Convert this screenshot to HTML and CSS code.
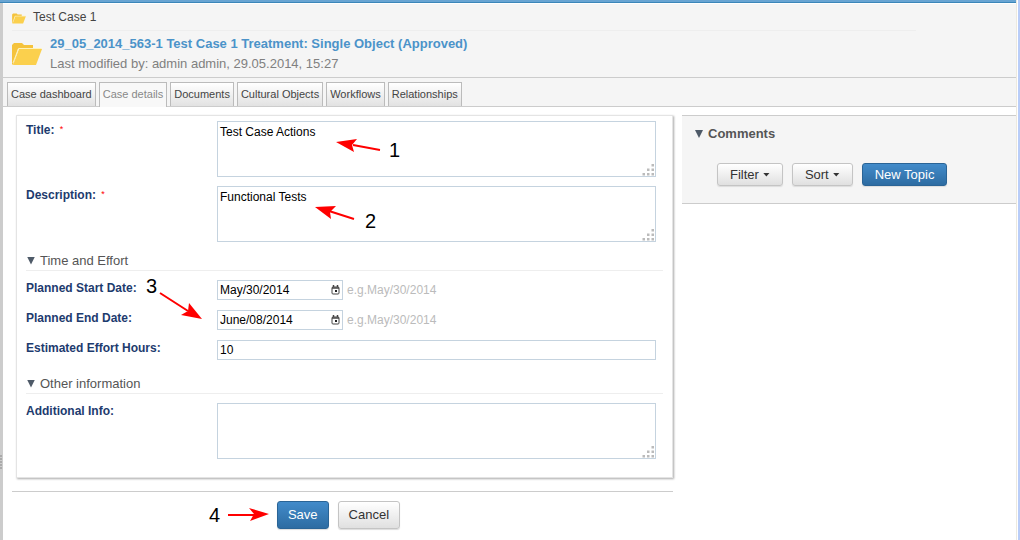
FILE: index.html
```html
<!DOCTYPE html>
<html lang="en">
<head>
<meta charset="utf-8">
<title>Test Case 1</title>
<link rel="stylesheet" href="styles.css">
</head>
<body>
<svg class="defs" aria-hidden="true">
  <symbol id="folder" viewBox="0 0 30 24">
    <path d="M0 22V3L2 1h8l2 2h9v4H6L1 23z" fill="#f5c33c"/>
    <path d="M7 7h23l-6 16H1z" fill="#fbd04d"/>
    <path d="M1 21L6.500 6.500H29.500" fill="none" stroke="#fff3b8"/>
  </symbol>
  <symbol id="calendar" viewBox="0 0 9 10">
    <rect x="1" y="2" width="7" height="7" rx="1" fill="#fff" stroke="#444"/>
    <path d="M1 3h7M2.500 0v2M6.500 0v2" stroke="#444" stroke-width="1.500"/>
    <rect x="4" y="5" width="2" height="2" fill="#222"/>
  </symbol>
  <symbol id="grip" viewBox="0 0 12 12">
    <path d="M9.500 0h2.500v2.500H9.500zM5 4.500h2.500V7H5zM9.500 4.500h2.500V7H9.500zM.500 9h2.500v2.500H.500zM5 9h2.500v2.500H5zM9.500 9h2.500v2.500H9.500z" fill="#bbb"/>
  </symbol>
</svg>
<div class="app">
  <header class="header">
    <div class="crumb"><svg class="folder-small"><use href="#folder"/></svg><span>Test Case 1</span></div>
    <div class="summary">
      <svg class="folder-large"><use href="#folder"/></svg>
      <div>
        <h1 class="summary-title">29_05_2014_563-1 Test Case 1 Treatment: Single Object (Approved)</h1>
        <p class="summary-meta">Last modified by: admin admin, 29.05.2014, 15:27</p>
      </div>
    </div>
  </header>
  <nav class="tabs">
    <a class="tab" href="#">Case dashboard</a>
    <a class="tab tab-active" href="#">Case details</a>
    <a class="tab" href="#">Documents</a>
    <a class="tab" href="#">Cultural Objects</a>
    <a class="tab" href="#">Workflows</a>
    <a class="tab" href="#">Relationships</a>
  </nav>
  <main class="workspace">
    <form class="editor">
      <div class="panel">
        <div class="row row-tall">
          <label class="label" for="title">Title: <span class="required">*</span></label>
          <div class="control">
            <textarea class="field area" id="title">Test Case Actions</textarea>
            <svg class="grip"><use href="#grip"/></svg>
          </div>
        </div>
        <div class="row row-tall">
          <label class="label" for="description">Description: <span class="required">*</span></label>
          <div class="control">
            <textarea class="field area" id="description">Functional Tests</textarea>
            <svg class="grip"><use href="#grip"/></svg>
          </div>
        </div>
        <h2 class="section"><span class="triangle"></span>Time and Effort</h2>
        <div class="row">
          <label class="label" for="start">Planned Start Date:</label>
          <div class="control date">
            <div class="date-box"><input class="field" id="start" type="text" value="May/30/2014"><svg class="calendar"><use href="#calendar"/></svg></div>
            <span class="hint">e.g.May/30/2014</span>
          </div>
        </div>
        <div class="row">
          <label class="label" for="end">Planned End Date:</label>
          <div class="control date">
            <div class="date-box"><input class="field" id="end" type="text" value="June/08/2014"><svg class="calendar"><use href="#calendar"/></svg></div>
            <span class="hint">e.g.May/30/2014</span>
          </div>
        </div>
        <div class="row">
          <label class="label" for="effort">Estimated Effort Hours:</label>
          <div class="control"><input class="field" id="effort" type="text" value="10"></div>
        </div>
        <h2 class="section section-spaced"><span class="triangle"></span>Other information</h2>
        <div class="row row-tall">
          <label class="label" for="info">Additional Info:</label>
          <div class="control">
            <textarea class="field area" id="info"></textarea>
            <svg class="grip"><use href="#grip"/></svg>
          </div>
        </div>
      </div>
      <div class="actions">
        <button class="button button-large button-primary" type="button">Save</button>
        <button class="button button-large" type="button">Cancel</button>
      </div>
    </form>
    <aside class="comments">
      <h2 class="comments-title"><span class="triangle"></span>Comments</h2>
      <div class="comments-tools">
        <button class="button" type="button">Filter<span class="caret"></span></button>
        <button class="button" type="button">Sort<span class="caret"></span></button>
        <button class="button button-primary" type="button">New Topic</button>
      </div>
    </aside>
  </main>
  <svg class="arrows" width="1000" height="540" aria-hidden="true">
    <g stroke="#f00" stroke-width="2" fill="none">
      <path d="M380 150L353 145M354 219L329 211M160 293L188 311M228 515H254"/>
    </g>
    <g fill="#f00">
      <path d="M336 142L357 139L352 145L354 152Z"/>
      <path d="M315 207L336 206L330 212L331 219Z"/>
      <path d="M202 319L181 315L188 311L189 303Z"/>
      <path d="M269 514L249 508L254 514L250 521Z"/>
    </g>
  </svg>
  <span class="mark mark-one">1</span>
  <span class="mark mark-two">2</span>
  <span class="mark mark-three">3</span>
  <span class="mark mark-four">4</span>
  <svg class="splitter" aria-hidden="true"><path d="M0 1h2M0 4h2M0 7h2M0 10h2M0 13h2" stroke="#888"/></svg>
</div>
</body>
</html>
```
FILE: styles.css
```css
* { box-sizing: border-box; }
body {
  margin: 0;
  background: #fff;
  color: #444;
  font: 13px/20px "Liberation Sans", Arial, sans-serif;
}
h1, h2, p { margin: 0; font-size: 13px; font-weight: normal; }
.defs { position: absolute; width: 0; height: 0; }
.app {
  position: relative;
  min-height: 100vh;
  padding-right: 4px;
  border-left: 3px solid #ccc;
  background: linear-gradient(to left, #b9cdf8 2px, #fff 2px, #fff 3px, #ece9e0 3px, #ece9e0 4px, #fff 4px);
}
.header {
  padding: 4px 0 3px 9px;
  border-top: 3px solid #68a4d2;
  border-bottom: 1px solid #ccc;
  background: #f5f5f5;
  box-shadow: inset 0 1px #fff;
}
.app::before {
  content: "";
  position: absolute;
  top: 2px;
  left: -3px;
  right: 4px;
  height: 1px;
  background: #3b86b9;
}
.app::after {
  content: "";
  position: absolute;
  top: 0;
  left: -3px;
  width: 3px;
  height: 2px;
  background: #68a4d2;
}
.crumb {
  display: flex;
  align-items: center;
  gap: 7px;
  width: 90%;
  height: 24px;
  padding-bottom: 3px;
  border-bottom: 1px solid #eee;
  font-size: 12px;
}
.folder-small { width: 14px; height: 11px; margin-top: 2px; }
.folder-large { width: 30px; height: 24px; margin-top: 8px; }
.summary { display: flex; gap: 8px; padding-top: 3px; }
.summary-title { color: #4b93c9; font-weight: bold; }
.summary-meta { color: #808080; }
.tabs {
  display: flex;
  gap: 3px;
  height: 29px;
  padding: 4px 4px 0;
  border-bottom: 1px solid #ccc;
  background: #f5f5f5;
}
.tab {
  height: 24px;
  padding: 0 3px;
  border: 1px solid #bbb;
  border-bottom: 0;
  background: linear-gradient(#fff, #e2e2e2);
  color: #444;
  font-size: 11px;
  line-height: 23px;
  text-decoration: none;
  white-space: nowrap;
}
.tab-active { height: 25px; background: #f8f8f8; color: #888; }
.workspace {
  display: grid;
  grid-template-columns: 661fr 334fr;
  align-items: start;
  gap: 9px;
  padding: 8px 0 10px 9px;
}
.editor { min-width: 0; }
.panel {
  margin-left: 4px;
  padding: 5px 9px 18px;
  border: 1px solid #e4e4e4;
  background: #fff;
  box-shadow: 1px 1px 2px #aaa;
}
.row {
  display: grid;
  grid-template-columns: 191px 1fr;
  margin-bottom: 10px;
  padding-right: 7px;
}
.row-tall { margin-bottom: 9px; }
.panel > .row:last-child { margin-bottom: 0; }
.label { color: #1d3b6e; font-size: 12px; font-weight: bold; line-height: 16px; }
.required { margin-left: 2px; color: #f00; font-size: 9px; font-weight: normal; vertical-align: 2px; }
.control { position: relative; min-width: 0; }
.field {
  display: block;
  width: 100%;
  height: 20px;
  margin: 0;
  padding: 0 2px;
  border: 1px solid #c5d3df;
  border-radius: 0;
  background: #fff;
  color: #000;
  font: 12px/20px "Liberation Sans", Arial, sans-serif;
}
.area { height: 56px; resize: none; }
.grip { position: absolute; right: 2px; bottom: 1px; width: 12px; height: 12px; }
.date { display: flex; gap: 4px; }
.date-box { position: relative; width: 126px; }
.calendar { position: absolute; top: 5px; right: 3px; width: 9px; height: 10px; }
.hint { color: #bbb; font-size: 12px; }
.section {
  display: flex;
  align-items: center;
  gap: 5px;
  margin-bottom: 9px;
  padding-left: 1px;
  border-bottom: 1px solid #eee;
  color: #555;
  line-height: 19px;
}
.section-spaced { margin-top: 14px; }
.triangle {
  width: 8px;
  height: 8px;
  background: #4e5a68;
  clip-path: polygon(0 0, 100% 0, 50% 100%);
}
.actions {
  display: flex;
  justify-content: center;
  gap: 9px;
  margin-top: 13px;
  padding: 9px 8px 0 0;
  border-top: 1px solid #ccc;
}
.button {
  height: 23px;
  padding: 0 12px;
  border: 1px solid #c4c4c4;
  border-radius: 3px;
  background: linear-gradient(#fff, #e0e0e0);
  box-shadow: 0 1px 1px #ddd;
  color: #333;
  font: 13px/20px "Liberation Sans", Arial, sans-serif;
}
.button-large { height: 28px; padding: 0 10px; }
.button-primary { border-color: #2a6496; background: linear-gradient(#428bca, #2d6ca2); color: #fff; }
.caret {
  display: inline-block;
  width: 7px;
  height: 4px;
  margin-left: 4px;
  background: #333;
  clip-path: polygon(0 0, 100% 0, 50% 100%);
  vertical-align: 2px;
}
.comments {
  padding: 8px 13px 17px;
  border: solid #ccc;
  border-width: 1px 0;
  background: #f5f5f5;
}
.comments-title { display: flex; align-items: center; gap: 5px; color: #555; font-weight: bold; }
.comments-tools { display: flex; gap: 9px; margin-top: 19px; padding-left: 22px; }
.arrows { position: absolute; top: 0; left: -3px; pointer-events: none; }
.mark { position: absolute; color: #000; font-size: 20px; line-height: 20px; }
.mark-one { top: 140px; left: 386px; }
.mark-two { top: 211px; left: 362px; }
.mark-three { top: 276px; left: 143px; }
.mark-four { top: 505px; left: 206px; }
.splitter { position: absolute; top: 455px; left: -3px; width: 3px; height: 14px; }
```
